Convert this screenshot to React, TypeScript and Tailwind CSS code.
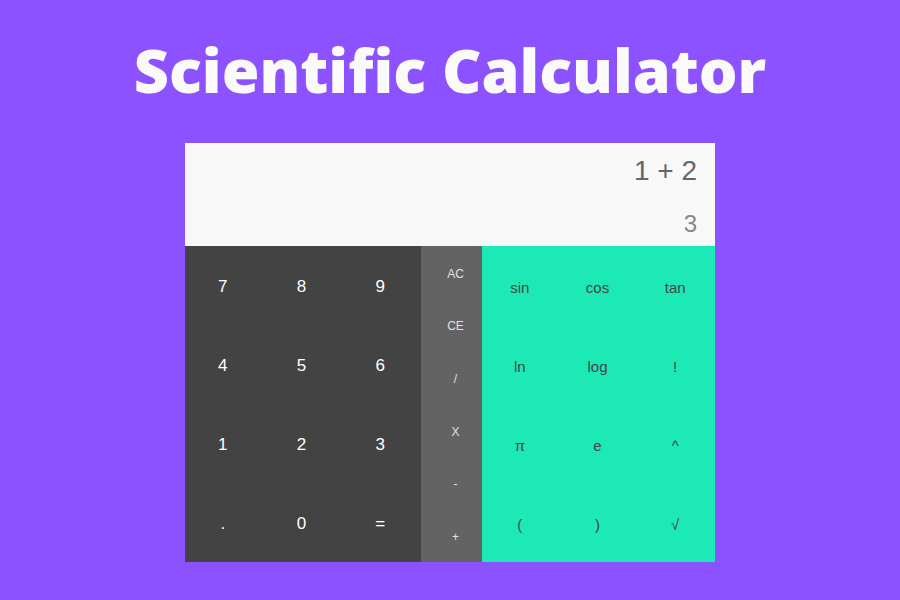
const numberKeys = ["7", "8", "9", "4", "5", "6", "1", "2", "3", ".", "0", "="];
const operatorKeys = ["AC", "CE", "/", "X", "-", "+"];
const scienceKeys = ["sin", "cos", "tan", "ln", "log", "!", "π", "e", "^", "(", ")", "√"];

export default function App() {
  return (
    <div className="flex h-[600px] w-[900px] flex-col items-center bg-[#8c52ff] font-['Liberation_Sans',Arial,sans-serif]">
      <h1 className="mt-[30px] font-['Open_Sans',sans-serif] text-[61px] leading-[80px] font-extrabold text-[#fafafa]">
        Scientific Calculator
      </h1>

      <div className="mt-[33px] flex w-[530px] flex-col">
        <div className="flex h-[103px] flex-col items-end bg-[#f8f8f8] pr-[18px]">
          <p className="mt-[13px] text-[28px] leading-[30px] text-[#666]">1 + 2</p>
          <p className="mt-[25px] text-[24px] leading-[26px] text-[#888]">3</p>
        </div>

        <div className="flex h-[316px]">
          <div className="grid w-[236px] grid-cols-3 grid-rows-4 bg-[#434343]">
            {numberKeys.map((key) => (
              <button key={key} className="flex items-center justify-center pt-[3px] pr-[3px] text-[17px] text-white">
                {key}
              </button>
            ))}
          </div>

          <div className="grid w-[61px] grid-rows-6 bg-[#636363] pl-[8px]">
            {operatorKeys.map((key) => (
              <button key={key} className="flex items-center justify-center pt-[3px] text-[12px] text-[#e0e0e0]">
                {key}
              </button>
            ))}
          </div>

          <div className="grid flex-1 grid-cols-3 grid-rows-4 bg-[#1de9b6]">
            {scienceKeys.map((key) => (
              <button key={key} className="flex items-center justify-center pt-[5px] pr-[2px] text-[15px] text-[#444]">
                {key}
              </button>
            ))}
          </div>
        </div>
      </div>
    </div>
  );
}
